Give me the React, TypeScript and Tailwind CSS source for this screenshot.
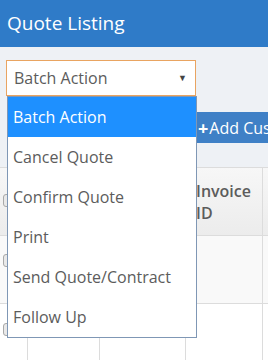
import React from "react";

const actions = [
  "Batch Action",
  "Cancel Quote",
  "Confirm Quote",
  "Print",
  "Send Quote/Contract",
  "Follow Up",
];

const Checkbox: React.FC = () => (
  <span className="block w-[13px] h-[13px] rounded-[3px] border border-[#a9a9a9] bg-[#e9e9e9]" />
);

const App: React.FC = () => {
  return (
    <div className="w-[268px] h-[360px] overflow-hidden bg-[#eef1f5] font-['Open_Sans',sans-serif]">
      {/* Page header */}
      <div className="h-[47px] bg-[#2f7bc8] pl-[7px] flex items-center text-white text-[19px]">
        Quote Listing
      </div>

      <div className="relative">
        {/* Closed select */}
        <div className="pl-[6px] pt-[13px]">
          <div className="w-[190px] h-[36px] bg-white border border-[#e9a461] flex items-center justify-between pl-[7px] pr-[8px] text-[16px] text-[#5c5c5c]">
            <span>Batch Action</span>
            <span className="text-[9px] text-[#444]">▼</span>
          </div>
        </div>

        {/* Toolbar */}
        <div className="flex pl-[186px] mt-[16px] whitespace-nowrap">
          <button className="h-[31px] bg-[#3f80c6] text-white text-[16px] pl-[12px] pr-[10px] flex items-center">
            <span className="font-bold text-[18px] leading-none mr-[1px]">+</span>Add Customer
          </button>
        </div>

        {/* Table */}
        <div className="mt-[24px] w-[300px] border-t border-[#dcdcdc] text-[16px] text-[#5c5c5c]">
          <div className="grid grid-cols-[28px_72px_86px_77px_1fr] h-[68px] bg-gradient-to-b from-[#f7f7f7] to-[#ececec] border-b border-[#dcdcdc]">
            <div className="border-r border-[#dcdcdc] pl-[3px] pt-[26px]"><Checkbox /></div>
            <div className="border-r border-[#dcdcdc]" />
            <div className="border-r border-[#dcdcdc]" />
            <div className="border-r border-[#dcdcdc] pl-[10px] flex items-center leading-[22px] font-semibold">
              Invoice<br />ID
            </div>
            <div />
          </div>
          <div className="grid grid-cols-[28px_72px_86px_77px_1fr] h-[68px] bg-[#f9f9f9] border-b border-[#dcdcdc]">
            <div className="border-r border-[#dcdcdc] pl-[3px] pt-[18px]"><Checkbox /></div>
            <div className="border-r border-[#dcdcdc]" />
            <div className="border-r border-[#dcdcdc]" />
            <div className="border-r border-[#dcdcdc]" />
            <div />
          </div>
          <div className="grid grid-cols-[28px_72px_86px_77px_1fr] h-[68px] bg-white">
            <div className="border-r border-[#dcdcdc] pl-[3px] pt-[19px]"><Checkbox /></div>
            <div className="border-r border-[#dcdcdc]" />
            <div className="border-r border-[#dcdcdc]" />
            <div className="border-r border-[#dcdcdc]" />
            <div />
          </div>
        </div>

        {/* Open dropdown list */}
        <ul className="absolute left-[7px] top-[49px] w-[190px] bg-white border border-[#7f97b5] text-[16px] text-[#5c5c5c]">
          {actions.map((a, i) => (
            <li
              key={a}
              className={
                i === 0
                  ? "h-[40px] leading-[40px] pl-[5px] bg-[#1e90ff] text-white"
                  : "h-[40px] leading-[40px] pl-[5px]"
              }
            >
              {a}
            </li>
          ))}
        </ul>
      </div>
    </div>
  );
};

export default App;
